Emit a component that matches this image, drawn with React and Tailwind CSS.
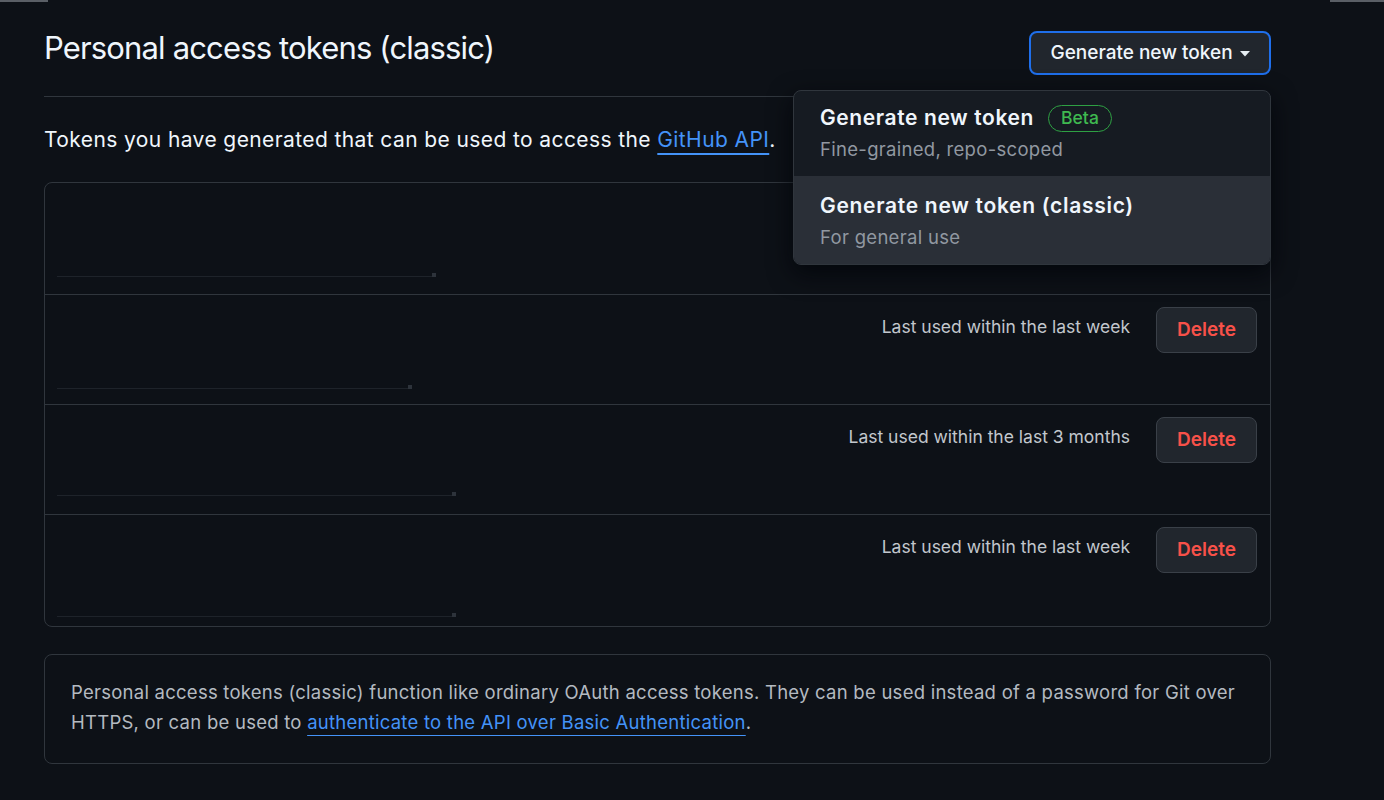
import { useState } from "react";

const font = { fontFamily: 'Inter, "Liberation Sans", Arial, sans-serif' };

const tokens = [
  { id: 1, lastUsed: "", line: "w-[375px]", pad: "pb-[17px]", h: "h-[111px]" },
  { id: 2, lastUsed: "Last used within the last week", line: "w-[351px]", pad: "pb-[15px]", h: "h-[110px]" },
  { id: 3, lastUsed: "Last used within the last 3 months", line: "w-[395px]", pad: "pb-[18px]", h: "h-[110px]" },
  { id: 4, lastUsed: "Last used within the last week", line: "w-[395px]", pad: "pb-[9px]", h: "h-[112px]" },
];

function Caret() {
  return (
    <svg width="10" height="6" viewBox="0 0 10 6" className="ml-[7px] mt-[2px]">
      <path d="M0 0h10L5 5.5z" fill="#e6edf3" />
    </svg>
  );
}

function TokenMenu() {
  return (
    <div className="absolute right-0 top-[59px] w-[478px] bg-[#161b22] border border-[#30363d] rounded-[8px] overflow-hidden shadow-[0_8px_24px_rgba(1,4,9,0.8)] z-10">
      <div className="pl-[26px] pt-[13px] pb-[14px]">
        <div className="flex items-center gap-[14px]">
          <span className="text-[21px] leading-[28px] font-semibold tracking-[0.6px] text-[#f0f6fc]">Generate new token</span>
          <span className="h-[27px] w-[64px] flex items-center justify-center rounded-full border border-[#2ea043] text-[#3fb950] text-[17.5px] font-medium">
            Beta
          </span>
        </div>
        <p className="mt-[4px] text-[18.5px] leading-[26px] tracking-[0.3px] text-[#9198a1]">Fine-grained, repo-scoped</p>
      </div>
      <div className="pl-[26px] pt-[16px] pb-[14px] bg-[#2a2f37]">
        <p className="text-[21px] leading-[28px] font-semibold tracking-[0.7px] text-[#f0f6fc]">Generate new token (classic)</p>
        <p className="mt-[4px] text-[18.5px] leading-[26px] tracking-[0.3px] text-[#9198a1]">For general use</p>
      </div>
    </div>
  );
}

function TokenRow({ token, first }) {
  return (
    <div className={`flex justify-between ${token.h} ${first ? "" : "border-t border-[#30363d]"}`}>
      <div className={`flex flex-col justify-end pl-[12px] ${token.pad}`}>
        <div className="flex items-end">
          <div className={`h-px bg-[#1e232a] ${token.line}`} />
          <div className="w-[4px] h-[4px] bg-[#2d333b]" />
        </div>
      </div>
      {token.lastUsed && (
        <div className="flex items-start gap-[26px] pt-[12px] pr-[13px]">
          <span className="mt-[9px] text-[17.5px] leading-[22px] text-[#c2c7cd]">{token.lastUsed}</span>
          <button className="w-[101px] h-[46px] rounded-[8px] bg-[#21262d] border border-[#3a4048] text-[19px] font-semibold text-[#f85149]">
            Delete
          </button>
        </div>
      )}
    </div>
  );
}

export default function App() {
  const [open] = useState(true);

  return (
    <div className="min-h-screen bg-[#0d1117] text-[#e6edf3]" style={font}>
      <div className="flex justify-between h-[2px]">
        <div className="w-[48px] bg-[#5a5f66]" />
        <div className="w-[54px] bg-[#5a5f66]" />
      </div>
      <div className="ml-[44px] w-[1227px]">
        <div className="flex justify-between items-start pt-[29px] pb-[21px] border-b border-[#30363d]">
          <h1 className="text-[31px] leading-[34px] font-normal tracking-[-0.85px] text-[#f0f6fc]">Personal access tokens (classic)</h1>
          <div className="relative">
            <button className="h-[44px] w-[242px] flex items-center justify-center rounded-[8px] bg-[#21262d] border-2 border-[#1f6feb] text-[19px] font-medium text-[#f0f6fc]">
              Generate new token
              <Caret />
            </button>
            {open && <TokenMenu />}
          </div>
        </div>

        <p className="mt-[29px] text-[21px] leading-[28px] tracking-[0.4px] text-[#f0f6fc]">
          Tokens you have generated that can be used to access the{" "}
          <a className="text-[#4493f8] underline decoration-[#4493f8] underline-offset-[6px]">GitHub API</a>.
        </p>

        <div className="mt-[28px] border border-[#30363d] rounded-[8px]">
          {tokens.map((t, i) => (
            <TokenRow key={t.id} token={t} first={i === 0} />
          ))}
        </div>

        <div className="mt-[27px] border border-[#30363d] rounded-[8px] px-[26px] pt-[22px] pb-[26px]">
          <p className="text-[18.5px] leading-[30px] tracking-[0.25px] text-[#b4bac1]">
            Personal access tokens (classic) function like ordinary OAuth access tokens. They can be used instead of a password for Git over
            HTTPS, or can be used to{" "}
            <a className="text-[#4493f8] underline decoration-[#4493f8] underline-offset-[6px]">
              authenticate to the API over Basic Authentication
            </a>
            .
          </p>
        </div>
      </div>
    </div>
  );
}
